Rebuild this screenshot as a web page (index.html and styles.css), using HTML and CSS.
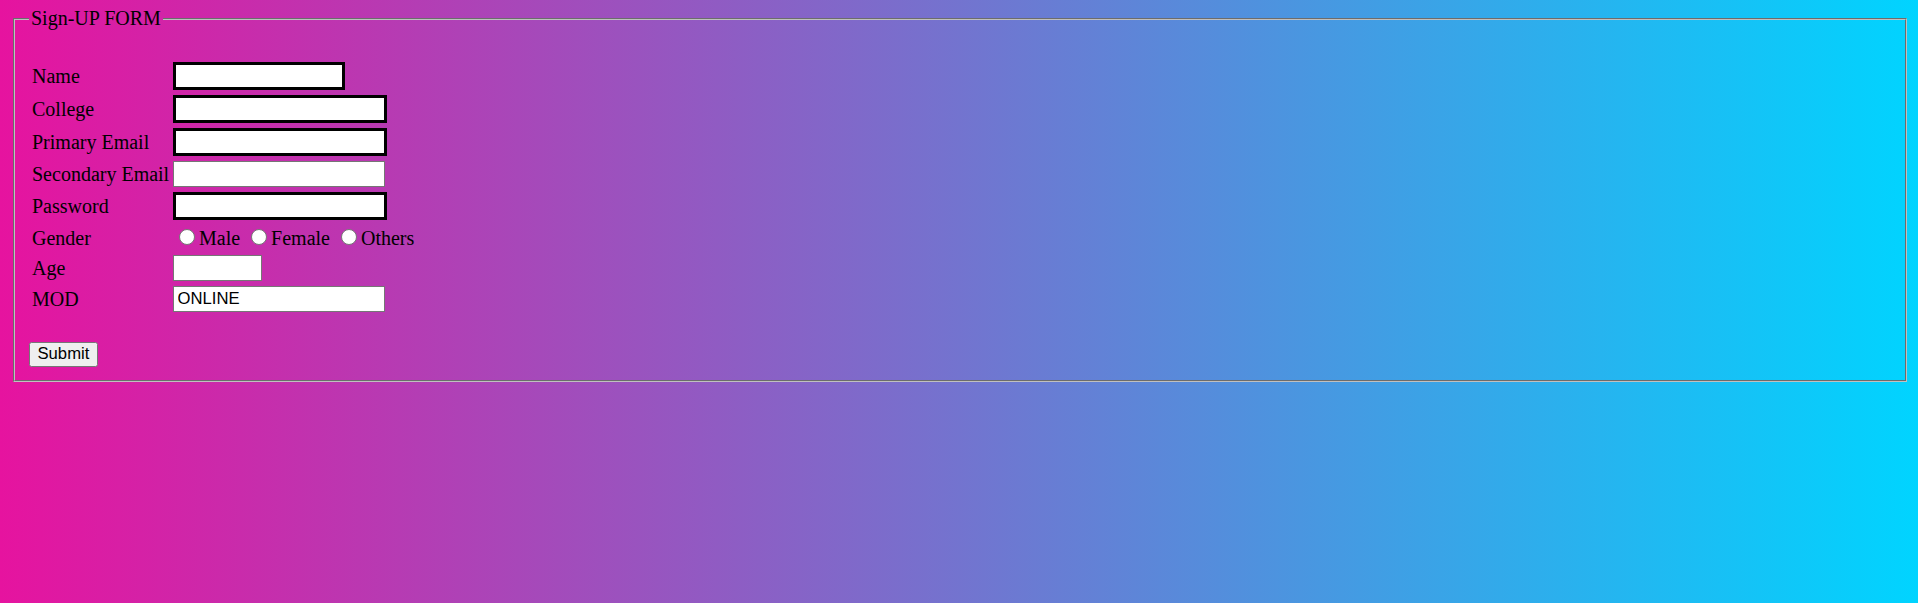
FILE: index.html
```html
<!DOCTYPE html>
<html lang="en">
<head>
<meta charset="utf-8">
<title>Sign-UP FORM</title>
<link rel="stylesheet" href="styles.css">
</head>
<body>
<form class="signup" onsubmit="return false;">
  <fieldset class="panel">
    <legend class="panel-title">Sign-UP FORM</legend>
    <div class="fields">
      <label class="field-label" for="f-name">Name</label>
      <div class="field-control"><input class="text-input is-marked is-short" id="f-name" type="text"></div>

      <label class="field-label" for="f-college">College</label>
      <div class="field-control"><input class="text-input is-marked" id="f-college" type="text"></div>

      <label class="field-label" for="f-email1">Primary Email</label>
      <div class="field-control"><input class="text-input is-marked" id="f-email1" type="email"></div>

      <label class="field-label" for="f-email2">Secondary Email</label>
      <div class="field-control"><input class="text-input" id="f-email2" type="email"></div>

      <label class="field-label" for="f-pass">Password</label>
      <div class="field-control"><input class="text-input is-marked" id="f-pass" type="password"></div>

      <span class="field-label is-gender">Gender</span>
      <div class="field-control radios">
        <input class="radio" type="radio" name="gender" id="g-male"><label class="radio-text" for="g-male">Male</label>
        <input class="radio" type="radio" name="gender" id="g-female"><label class="radio-text" for="g-female">Female</label>
        <input class="radio" type="radio" name="gender" id="g-others"><label class="radio-text" for="g-others">Others</label>
      </div>

      <label class="field-label" for="f-age">Age</label>
      <div class="field-control"><input class="text-input is-age" id="f-age" type="text"></div>

      <label class="field-label" for="f-mod">MOD</label>
      <div class="field-control"><input class="text-input" id="f-mod" type="text" value="ONLINE"></div>
    </div>
    <button class="submit" type="submit">Submit</button>
  </fieldset>
</form>
</body>
</html>
```

FILE: styles.css
```css
html {
  min-height: 100%;
  background: linear-gradient(to right, #e6139f 0%, #00d4ff 100%);
}

body {
  margin: 7px 11px 0 13px;
  font-family: "Liberation Serif", "Times New Roman", serif;
  font-size: 20px;
  color: #000;
}

.signup {
  margin: 0;
}

.panel {
  margin: 0;
  min-width: 0;
  border: 2px groove #c0c0c0;
  padding: 0 14px 13px 14px;
}

.panel-title {
  padding: 0 2px;
  font-size: 20px;
  line-height: 23px;
}

.fields {
  display: grid;
  grid-template-columns: 141px auto;
  justify-content: start;
  align-items: center;
  row-gap: 5px;
  margin: 32px 0 0 3px;
}

.field-label {
  line-height: 23px;
  white-space: nowrap;
}

.field-label.is-gender {
  box-sizing: border-box;
  height: 25px;
  padding-top: 2px;
}

.field-control {
  display: block;
}

.text-input {
  display: block;
  box-sizing: border-box;
  margin: 0;
  width: 212px;
  height: 26px;
  padding: 0 3.5px;
  border: 1px solid #767676;
  border-radius: 0;
  background: #fff;
  color: #000;
  font-family: "Liberation Sans", Arial, sans-serif;
  font-size: 16.67px;
  outline: none;
}

.is-marked {
  width: 214px;
  height: 28px;
  border: 3px solid #000;
}

.is-short {
  width: 172px;
}

.is-age {
  width: 89px;
}

.radios {
  box-sizing: border-box;
  height: 25px;
  padding-top: 1px;
  line-height: 24px;
  white-space: nowrap;
}

.radio {
  -webkit-appearance: none;
  appearance: none;
  display: inline-block;
  box-sizing: border-box;
  width: 16px;
  height: 16px;
  margin: 0 3.75px 0 6.25px;
  border: 1px solid #767676;
  border-radius: 50%;
  background: #fff;
  vertical-align: baseline;
}

.radio-text {
  line-height: 24px;
}

.submit {
  display: block;
  box-sizing: border-box;
  margin: 30px 0 0 0;
  height: 25px;
  padding: 0 7.5px;
  border: 1px solid #767676;
  border-radius: 2.5px;
  background: #efefef;
  color: #000;
  font-family: "Liberation Sans", Arial, sans-serif;
  font-size: 16.67px;
  line-height: 1;
}
```
